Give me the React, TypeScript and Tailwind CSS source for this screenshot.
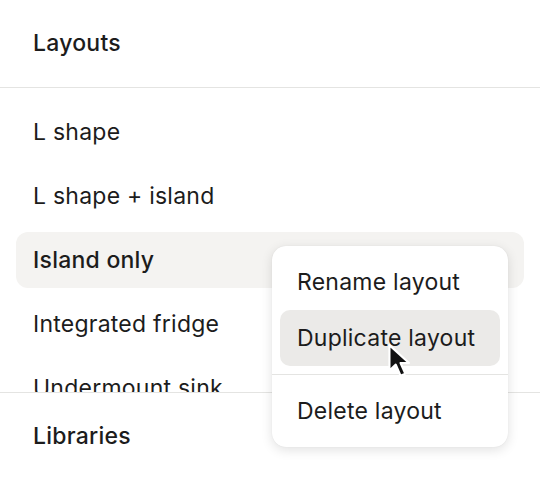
import React from "react";

const layouts = [
  "L shape",
  "L shape + island",
  "Island only",
  "Integrated fridge",
  "Undermount sink",
];

function Cursor() {
  return (
    <svg
      className="absolute left-[386px] top-[343px] pointer-events-none"
      width="28"
      height="38"
      viewBox="0 0 26 36"
    >
      <path
        d="M3 2 L3 26 L9 20.5 L13.5 31 L18 29 L13.5 19 L21.5 19 Z"
        fill="#111"
        stroke="#fff"
        strokeWidth="2"
        strokeLinejoin="round"
      />
    </svg>
  );
}

export default function App() {
  return (
    <div
      className="relative w-[540px] h-[480px] bg-white text-[#1c1c1c] overflow-hidden flex flex-col tracking-[0.015em]"
      style={{ fontFamily: "Inter, 'Noto Sans', sans-serif" }}
    >
      <div className="h-[87px] shrink-0 flex items-center px-[33px] text-[23px] font-medium">
        Layouts
      </div>
      <div className="h-px bg-[#e4e4e2] shrink-0" />
      <div className="h-[304px] shrink-0 overflow-hidden px-4 pt-4 flex flex-col gap-2">
        {layouts.map((name) => {
          const active = name === "Island only";
          return (
            <div
              key={name}
              className={
                "h-[56px] shrink-0 flex items-center px-[17px] rounded-xl text-[23px] " +
                (active ? "bg-[#f4f3f1] font-medium" : "")
              }
            >
              {name}
            </div>
          );
        })}
      </div>
      <div className="h-px bg-[#e4e4e2] shrink-0" />
      <div className="flex-1 flex items-center px-[33px] text-[23px] font-medium">
        Libraries
      </div>

      <div className="absolute left-[272px] top-[246px] w-[236px] bg-white rounded-[14px] p-2 shadow-[0_3px_12px_rgba(0,0,0,0.12),0_0_1px_rgba(0,0,0,0.1)] flex flex-col text-[23px]">
        <div className="h-[56px] flex items-center px-[17px] rounded-[10px]">
          Rename layout
        </div>
        <div className="h-[56px] flex items-center px-[17px] rounded-[10px] bg-[#ebeae8]">
          Duplicate layout
        </div>
        <div className="h-px bg-[#e4e4e2] my-2 -mx-2" />
        <div className="h-[56px] flex items-center px-[17px] rounded-[10px]">
          Delete layout
        </div>
      </div>
      <Cursor />
    </div>
  );
}
